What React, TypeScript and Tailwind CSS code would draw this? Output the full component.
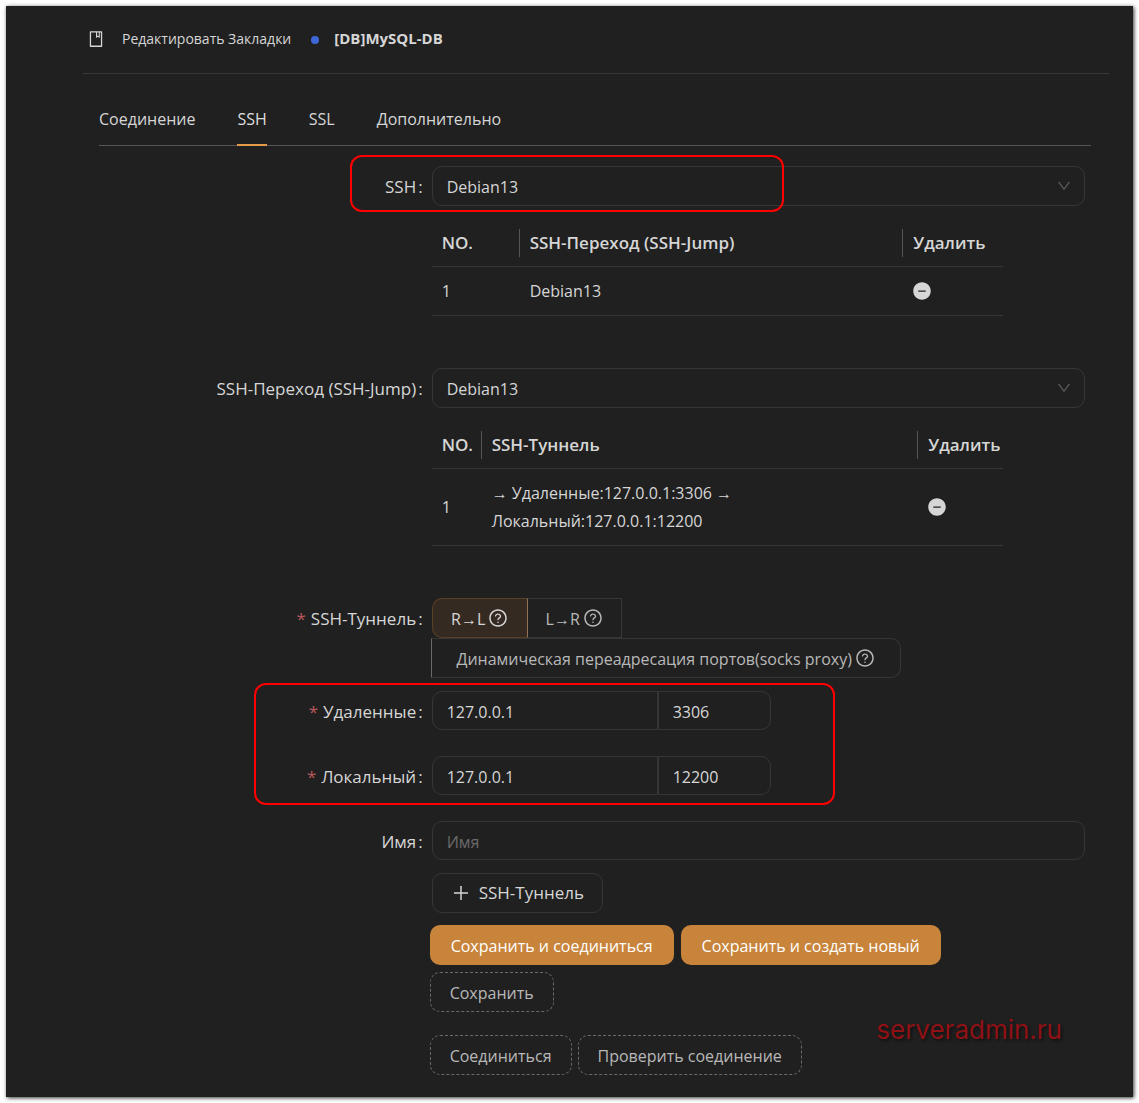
import { ReactNode, useState } from "react";
import clsx from "clsx";
import {
  AiFillMinusCircle,
  AiOutlineBook,
  AiOutlineDown,
  AiOutlinePlus,
  AiOutlineQuestionCircle,
} from "react-icons/ai";

const tabs = ["Соединение", "SSH", "SSL", "Дополнительно"];

const tunnelTypes = [
  {
    value: "local",
    label: "R→L",
    shape: "w-24 rounded-l-[10px] border-[#2f2f2f]",
  },
  {
    value: "remote",
    label: "L→R",
    shape: "w-[94px] border-l-0 border-[#363636]",
  },
  {
    value: "dynamic",
    label: "Динамическая переадресация портов(socks proxy)",
    shape: "-ml-px w-[470px] rounded-r-[10px] border-[#363636] border-l-[#6a6a6a]",
  },
];

interface FormRowProps {
  label?: string;
  htmlFor?: string;
  required?: boolean;
  className?: string;
  children: ReactNode;
}

function FormRow(props: FormRowProps) {
  const { label, htmlFor, required, className, children } = props;

  return (
    <div className={clsx("grid grid-cols-3", className)}>
      <div className="flex h-[42px] items-center justify-end pr-[9px] text-[17px]">
        {label && (
          <label htmlFor={htmlFor} className="flex items-center gap-[2px]">
            {required && (
              <span className="mr-[3px] text-[#b9585c]" aria-hidden="true">
                *
              </span>
            )}
            <span>{label}</span>
            <span>:</span>
          </label>
        )}
      </div>
      <div className="col-span-2">{children}</div>
    </div>
  );
}

function Select({ id, options }: { id: string; options: string[] }) {
  return (
    <div className="relative">
      <select
        id={id}
        className="block h-10 w-full appearance-none rounded-[10px] border border-[#363636] bg-transparent px-[14px] pt-[2px] outline-none"
      >
        {options.map((option) => (
          <option key={option}>{option}</option>
        ))}
      </select>
      <AiOutlineDown className="pointer-events-none absolute right-[13px] top-3 size-4 text-[#5a5a5a]" />
    </div>
  );
}

interface JumpTableProps {
  title: string;
  firstCol: string;
  lastCol: string;
  children: ReactNode;
}

function JumpTable(props: JumpTableProps) {
  const { title, firstCol, lastCol, children } = props;

  return (
    <table className="mt-3 w-7/8 table-fixed text-left leading-7">
      <thead className="text-[17px]">
        <tr className="border-b border-[#363636]">
          <th className={clsx("pb-[9px] pt-[11px] font-semibold", firstCol)}>
            <div className="pl-[10px]">NO.</div>
          </th>
          <th className="pb-[9px] pt-[11px] font-semibold">
            <div className="border-l border-[#555] px-[10px]">{title}</div>
          </th>
          <th className={clsx("pb-[9px] pt-[11px] font-semibold", lastCol)}>
            <div className="border-l border-[#555] pl-[10px]">Удалить</div>
          </th>
        </tr>
      </thead>
      <tbody>
        <tr className="border-b border-[#363636]">
          <td className="px-[10px] py-[10px]">1</td>
          <td className="px-[11px] py-[10px]">{children}</td>
          <td className="px-[10px] py-[10px]">
            <button type="button" aria-label="Удалить" className="block">
              <AiFillMinusCircle className="size-5 text-[#d6d6d6]" />
            </button>
          </td>
        </tr>
      </tbody>
    </table>
  );
}

function HostPort({ id, host, port }: { id: string; host: string; port: string }) {
  return (
    <div className="flex">
      <input
        id={id}
        defaultValue={host}
        className="h-[39px] w-[226px] rounded-l-[10px] border border-[#363636] px-[14px] pt-[2px] outline-none"
      />
      <input
        aria-label="Port"
        defaultValue={port}
        className="h-[39px] w-[113px] rounded-r-[10px] border border-[#363636] px-[14px] pt-[2px] outline-none"
      />
    </div>
  );
}

function SolidButton({ children }: { children: ReactNode }) {
  return (
    <button
      type="button"
      className="h-10 rounded-[10px] bg-[#c8843b] px-[21px] pt-[2px] text-white"
    >
      {children}
    </button>
  );
}

function DashedButton({ children }: { children: ReactNode }) {
  return (
    <button
      type="button"
      className="h-10 rounded-[10px] border border-dashed border-[#6a6a6a] px-[19px] pt-[2px] text-[#b8b8b8]"
    >
      {children}
    </button>
  );
}

export default function App() {
  const [activeTab, setActiveTab] = useState("SSH");
  const [tunnelType, setTunnelType] = useState("local");

  return (
    <div className="bg-white p-[6px] font-['Open_Sans','Noto_Sans',sans-serif] text-[16px] text-[#d6d6d6]">
      <main className="relative bg-[#202020] pb-[22px] pl-[77px] pr-6 shadow-[1px_1px_4px_rgba(0,0,0,0.8)]">
        <header className="flex h-[68px] items-center border-b border-[#363636] pb-[2px] pl-1 text-[14px]">
          <AiOutlineBook className="size-[18px]" />
          <span className="ml-[17px]">Редактировать Закладки</span>
          <span className="ml-5 mt-[3px] size-2 rounded-full bg-[#3f66d8]" />
          <b className="ml-[15px] text-[15px]">[DB]MySQL-DB</b>
        </header>

        <div className="pl-4 pr-[18px]">
          <nav className="mt-[18px] flex gap-[42px] border-b border-[#555]" role="tablist">
            {tabs.map((tab) => (
              <button
                key={tab}
                type="button"
                role="tab"
                aria-selected={tab === activeTab}
                onClick={() => setActiveTab(tab)}
                className={clsx(
                  "-mb-px h-[54px] border-b-2 pt-[2px]",
                  tab === activeTab
                    ? "border-[#e39a4a] text-[#dedede]"
                    : "border-transparent"
                )}
              >
                {tab}
              </button>
            ))}
          </nav>

          <form className="mt-5">
            <div className="px-[6px]">
              <div className="relative">
                <FormRow label="SSH" htmlFor="ssh">
                  <Select id="ssh" options={["Debian13"]} />
                  <JumpTable
                    title="SSH-Переход (SSH-Jump)"
                    firstCol="w-[87px]"
                    lastCol="w-[101px]"
                  >
                    Debian13
                  </JumpTable>
                </FormRow>
                <div className="pointer-events-none absolute -top-[11px] left-1/4 h-[57px] w-[434px] rounded-xl border-2 border-[#f00]" />
              </div>

              <FormRow
                label="SSH-Переход (SSH-Jump)"
                htmlFor="jump"
                className="mt-[52px]"
              >
                <Select id="jump" options={["Debian13"]} />
                <JumpTable
                  title="SSH-Туннель"
                  firstCol="w-[49px]"
                  lastCol="w-[86px]"
                >
                  → Удаленные:127.0.0.1:3306 →
                  <br />
                  Локальный:127.0.0.1:12200
                </JumpTable>
              </FormRow>

              <FormRow label="SSH-Туннель" required className="mt-[52px]">
                <div className="flex flex-wrap" role="radiogroup" aria-label="SSH-Туннель">
                  {tunnelTypes.map(({ value, label, shape }) => (
                    <label
                      key={value}
                      className={clsx(
                        "flex h-10 cursor-pointer items-center justify-center gap-[3px] border",
                        shape,
                        value === tunnelType
                          ? "border-[#5a4027] border-r-[#927455] bg-[#352a22]"
                          : "text-[#b8b8b8]"
                      )}
                    >
                      <input
                        type="radio"
                        name="tunnelType"
                        value={value}
                        checked={value === tunnelType}
                        onChange={() => setTunnelType(value)}
                        className="sr-only"
                      />
                      <span className="pt-px">{label}</span>
                      <AiOutlineQuestionCircle className="size-5" />
                    </label>
                  ))}
                </div>
              </FormRow>

              <div className="relative mt-[13px]">
                <FormRow label="Удаленные" htmlFor="remoteHost" required>
                  <HostPort id="remoteHost" host="127.0.0.1" port="3306" />
                </FormRow>
                <FormRow
                  label="Локальный"
                  htmlFor="localHost"
                  required
                  className="mt-[23px]"
                >
                  <HostPort id="localHost" host="127.0.0.1" port="12200" />
                </FormRow>
                <div className="pointer-events-none absolute -top-2 left-[149px] h-[122px] w-[581px] rounded-xl border-2 border-[#f00]" />
              </div>

              <FormRow label="Имя" htmlFor="name" className="mt-[23px]">
                <input
                  id="name"
                  placeholder="Имя"
                  className="block h-[39px] w-full rounded-[10px] border border-[#363636] px-[14px] pt-[2px] outline-none placeholder:text-[#6a6a6a]"
                />
              </FormRow>

              <FormRow className="mt-[10px]">
                <button
                  type="button"
                  className="flex h-10 items-center gap-2 rounded-[10px] border border-[#363636] px-[18px] text-[17px]"
                >
                  <AiOutlinePlus className="size-5" />
                  SSH-Туннель
                </button>
              </FormRow>
            </div>

            <FormRow className="mt-[10px]">
              <div className="flex gap-[7px]">
                <SolidButton>Сохранить и соединиться</SolidButton>
                <SolidButton>Сохранить и создать новый</SolidButton>
              </div>
              <div className="mt-[7px] flex">
                <DashedButton>Сохранить</DashedButton>
              </div>
              <div className="mt-[23px] flex gap-[6px]">
                <DashedButton>Соединиться</DashedButton>
                <DashedButton>Проверить соединение</DashedButton>
              </div>
            </FormRow>
          </form>
        </div>

        <span className="absolute bottom-[51px] right-[71px] font-['Inter',sans-serif] text-[26px] leading-8 text-[#8f1115] [text-shadow:2px_2px_3px_rgba(0,0,0,0.5)]">
          serveradmin.ru
        </span>
      </main>
    </div>
  );
}
